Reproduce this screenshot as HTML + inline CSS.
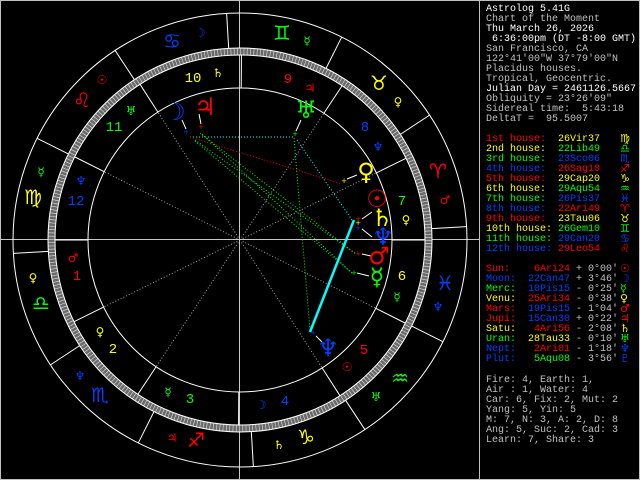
<!DOCTYPE html>
<html><head><meta charset="utf-8">
<style>
html,body{margin:0;padding:0;background:#000;}
body{width:640px;height:480px;position:relative;overflow:hidden;font-family:"Liberation Mono","DejaVu Sans Mono",monospace;}
svg{position:absolute;left:0;top:0;}
.p{position:absolute;font-size:10px;line-height:10px;white-space:pre;}
.w{color:#fff}.g{color:#c0c0c0}.r{color:#f00}.y{color:#ff0}.gr{color:#0f0}.b{color:#0040ff}
.gl{font-family:"DejaVu Sans",sans-serif;font-size:11px;}
</style></head><body>
<svg id="s" width="640" height="480" xmlns="http://www.w3.org/2000/svg" font-family="DejaVu Sans, sans-serif" text-anchor="middle" dominant-baseline="central">
<rect x="0.5" y="0.5" width="639" height="479" fill="none" stroke="#c0c0c0"/>
<line x1="479.5" y1="0" x2="479.5" y2="480" stroke="#c0c0c0"/>
<line x1="0" y1="239.5" x2="479" y2="239.5" stroke="#c8c8c8"/>
<line x1="239.5" y1="0" x2="239.5" y2="480" stroke="#c8c8c8"/>
<circle cx="240" cy="240" r="188.5" fill="none" stroke="#6a6a6a" stroke-width="7"/>
<circle cx="240" cy="240" r="188.5" fill="none" stroke="#d0d0d0" stroke-width="7" stroke-dasharray="0.7 2.59"/>
<g fill="none" stroke="#fff" stroke-width="1">
<circle cx="240" cy="240" r="227"/>
<circle cx="240" cy="240" r="192"/>
<circle cx="240" cy="240" r="185"/>
<circle cx="240" cy="240" r="152"/>
</g>
<g id="lines"></g>
<g fill="none" stroke-dasharray="1 2" stroke-width="1">
<line x1="190" y1="137" x2="295" y2="137" stroke="#0ff"/>
<line x1="297" y1="140" x2="352" y2="220" stroke="#0ff"/>
<line x1="190" y1="137" x2="342" y2="184" stroke="#f00"/>
<line x1="195" y1="140" x2="356" y2="254" stroke="#0f0"/>
<line x1="200" y1="133" x2="356" y2="254" stroke="#0f0"/>
<line x1="195" y1="141" x2="352" y2="273" stroke="#0f0"/>
<line x1="202" y1="134" x2="352" y2="273" stroke="#0f0"/>
<line x1="294" y1="138" x2="310" y2="330" stroke="#0f0"/>
</g>
<line x1="354" y1="220" x2="310" y2="332" stroke="#0ff" stroke-width="2.5"/>
<g stroke="#fff" stroke-width="1">
<line x1="186" y1="129" x2="182" y2="120"/>
<line x1="201" y1="124" x2="199" y2="114"/>
<line x1="296" y1="131" x2="301" y2="120"/>
<line x1="347" y1="179" x2="357" y2="175"/>
<line x1="362" y1="219" x2="372" y2="212"/>
<line x1="362" y1="229" x2="372" y2="237"/>
<line x1="362" y1="254" x2="371" y2="256"/>
<line x1="357" y1="273" x2="369" y2="276"/>
<line x1="316" y1="336" x2="322" y2="342"/>
</g>
<g font-size="7">
<text x="186" y="132" fill="#0040ff">+</text>
<text x="201" y="127" fill="#f00">+</text>
<text x="295" y="134" fill="#0f0">+</text>
<text x="344" y="181" fill="#ff0">+</text>
<text x="358" y="219" fill="#f00">+</text>
<text x="358" y="223" fill="#ff0">+</text>
<text x="358" y="228" fill="#0040ff">+</text>
<text x="358" y="254" fill="#f00">+</text>
<text x="354" y="273" fill="#0f0">+</text>
<text x="313" y="333" fill="#0040ff">+</text>
</g>
<g font-size="20">
<text x="172" y="41" fill="#0040ff">♋</text>
<text x="282" y="33" fill="#0f0">♊</text>
<text x="379" y="83" fill="#ff0">♉</text>
<text x="438" y="171" fill="#f00">♈</text>
<text x="445" y="283" fill="#0040ff">♓</text>
<text x="400" y="378" fill="#0f0">♒</text>
<text x="306" y="437" fill="#ff0">♑</text>
<text x="196" y="440" fill="#f00">♐</text>
<text x="100" y="395" fill="#0040ff">♏</text>
<text x="41" y="303" fill="#0f0">♎</text>
<text x="33" y="197" fill="#ff0">♍</text>
<text x="82" y="100" fill="#f00">♌</text>
</g>
<g font-size="12">
<text x="102" y="80" fill="#f00">☉</text>
<text x="200" y="33" fill="#0040ff">☽</text>
<text x="307" y="41" fill="#0f0">☿</text>
<text x="398" y="102" fill="#ff0">♀</text>
<text x="445" y="200" fill="#f00">♂</text>
<text x="438" y="307" fill="#0040ff">♆</text>
<text x="376" y="397" fill="#0f0">♅</text>
<text x="279" y="445" fill="#ff0">♄</text>
<text x="172" y="438" fill="#f00">♃</text>
<text x="80" y="376" fill="#0040ff">♆</text>
<text x="33" y="278" fill="#ff0">♀</text>
<text x="41" y="172" fill="#0f0">☿</text>
<text x="218" y="73" fill="#ff0">♄</text>
<text x="131" y="111" fill="#0f0">♅</text>
<text x="81" y="181" fill="#0040ff">♆</text>
<text x="73" y="258" fill="#f00">♂</text>
<text x="100" y="332" fill="#ff0">♀</text>
<text x="168" y="392" fill="#0f0">☿</text>
<text x="261" y="405" fill="#0040ff">☽</text>
<text x="347" y="367" fill="#f00">☉</text>
<text x="397" y="297" fill="#0f0">☿</text>
<text x="406" y="220" fill="#ff0">♀</text>
<text x="378" y="147" fill="#0040ff">♆</text>
<text x="310" y="88" fill="#f00">♃</text>
</g>
<g font-family="Liberation Mono, monospace" font-size="14">
<text x="77" y="277" fill="#f00">1</text>
<text x="113" y="350" fill="#ff0">2</text>
<text x="190" y="400" fill="#0f0">3</text>
<text x="285" y="402" fill="#0040ff">4</text>
<text x="364" y="351" fill="#f00">5</text>
<text x="402" y="277" fill="#ff0">6</text>
<text x="402" y="202" fill="#0f0">7</text>
<text x="365" y="128" fill="#0040ff">8</text>
<text x="288" y="80" fill="#f00">9</text>
<text x="193" y="79" fill="#ff0">10</text>
<text x="114" y="128" fill="#0f0">11</text>
<text x="76" y="202" fill="#0040ff">12</text>
</g>
<g font-size="24">
<text x="175" y="112" fill="#0040ff">☽</text>
<text x="205" y="107" fill="#f00">♃</text>
<text x="306" y="110" fill="#0f0">♅</text>
<text x="366" y="172" fill="#ff0">♀</text>
<text x="377" y="199" fill="#f00">☉</text>
<text x="382" y="218" fill="#ff0">♄</text>
<text x="383" y="237" fill="#0040ff">♆</text>
<text x="379" y="256" fill="#f00">♂</text>
<text x="377" y="277" fill="#0f0">☿</text>
<text x="328" y="348" fill="#0040ff">♆</text>
</g>
</svg>
<script>
(function(){
var g=document.getElementById('lines'),c=240,h='';
function L(t,r1,r2,col,dash){var a=t*Math.PI/180,x1=c+r1*Math.cos(a),y1=c-r1*Math.sin(a),x2=c+r2*Math.cos(a),y2=c-r2*Math.sin(a);
h+='<line x1="'+x1+'" y1="'+y1+'" x2="'+x2+'" y2="'+y2+'" stroke="'+col+'"'+(dash?' stroke-dasharray="1 2"':'')+'/>';}
for(var k=0;k<12;k++)L(3.38+30*k,192,227,'#fff');
var hs=[180,206.2,236.5,269.55,302.7,333.3,0,26.2,56.5,89.55,122.7,153.3];
hs.forEach(function(t,i){L(t,152,185,'#fff');if(i%3!=0)L(t,3,152,'#a0a0a0',1);});
g.innerHTML=h;})();
</script>
<div class="p w" style="left:486px;top:5px">Astrolog 5.41G</div>
<div class="p g" style="left:486px;top:15px">Chart of the Moment</div>
<div class="p w" style="left:486px;top:25px">Thu March 26, 2026</div>
<div class="p w" style="left:486px;top:35px"> 6:36:00pm (DT -8:00 GMT)</div>
<div class="p g" style="left:486px;top:45px">San Francisco, CA</div>
<div class="p g" style="left:486px;top:55px">122°41'00"W 37°79'00"N</div>
<div class="p g" style="left:486px;top:65px">Placidus houses.</div>
<div class="p g" style="left:486px;top:75px">Tropical, Geocentric.</div>
<div class="p w" style="left:486px;top:85px">Julian Day = 2461126.5667</div>
<div class="p g" style="left:486px;top:95px">Obliquity = 23°26'09"</div>
<div class="p g" style="left:486px;top:105px">Sidereal time:  5:43:18</div>
<div class="p g" style="left:486px;top:115px">DeltaT =  95.5007</div>

<div class="p r" style="left:486px;top:135px">1st house:</div><div class="p y" style="left:558px;top:135px">26Vir37</div><div class="p y gl" style="left:620px;top:134px">♍</div>
<div class="p y" style="left:486px;top:145px">2nd house:</div><div class="p gr" style="left:558px;top:145px">22Lib49</div><div class="p gr gl" style="left:620px;top:144px">♎</div>
<div class="p gr" style="left:486px;top:155px">3rd house:</div><div class="p b" style="left:558px;top:155px">23Sco06</div><div class="p b gl" style="left:620px;top:154px">♏</div>
<div class="p b" style="left:486px;top:165px">4th house:</div><div class="p r" style="left:558px;top:165px">26Sag10</div><div class="p r gl" style="left:620px;top:164px">♐</div>
<div class="p r" style="left:486px;top:175px">5th house:</div><div class="p y" style="left:558px;top:175px">29Cap20</div><div class="p y gl" style="left:620px;top:174px">♑</div>
<div class="p y" style="left:486px;top:185px">6th house:</div><div class="p gr" style="left:558px;top:185px">29Aqu54</div><div class="p gr gl" style="left:620px;top:184px">♒</div>
<div class="p gr" style="left:486px;top:195px">7th house:</div><div class="p b" style="left:558px;top:195px">26Pis37</div><div class="p b gl" style="left:620px;top:194px">♓</div>
<div class="p b" style="left:486px;top:205px">8th house:</div><div class="p r" style="left:558px;top:205px">22Ari49</div><div class="p r gl" style="left:620px;top:204px">♈</div>
<div class="p r" style="left:486px;top:215px">9th house:</div><div class="p y" style="left:558px;top:215px">23Tau06</div><div class="p y gl" style="left:620px;top:214px">♉</div>
<div class="p y" style="left:486px;top:225px">10th house:</div><div class="p gr" style="left:558px;top:225px">26Gem10</div><div class="p gr gl" style="left:620px;top:224px">♊</div>
<div class="p gr" style="left:486px;top:235px">11th house:</div><div class="p b" style="left:558px;top:235px">29Can20</div><div class="p b gl" style="left:620px;top:234px">♋</div>
<div class="p b" style="left:486px;top:245px">12th house:</div><div class="p r" style="left:558px;top:245px">29Leo54</div><div class="p r gl" style="left:620px;top:244px">♌</div>

<div class="p r" style="left:486px;top:265px">Sun:</div><div class="p r" style="left:522px;top:265px">  6Ari24</div><div class="p g" style="left:576px;top:265px">+ 0°00'</div><div class="p r gl" style="left:620px;top:264px">☉</div>
<div class="p b" style="left:486px;top:275px">Moon:</div><div class="p b" style="left:522px;top:275px"> 22Can47</div><div class="p g" style="left:576px;top:275px">+ 3°46'</div><div class="p b gl" style="left:620px;top:274px">☽</div>
<div class="p gr" style="left:486px;top:285px">Merc:</div><div class="p b" style="left:522px;top:285px"> 10Pis15</div><div class="p g" style="left:576px;top:285px">- 0°25'</div><div class="p gr gl" style="left:620px;top:284px">☿</div>
<div class="p y" style="left:486px;top:295px">Venu:</div><div class="p r" style="left:522px;top:295px"> 25Ari34</div><div class="p g" style="left:576px;top:295px">- 0°38'</div><div class="p y gl" style="left:620px;top:294px">♀</div>
<div class="p r" style="left:486px;top:305px">Mars:</div><div class="p b" style="left:522px;top:305px"> 19Pis15</div><div class="p g" style="left:576px;top:305px">- 1°04'</div><div class="p r gl" style="left:620px;top:304px">♂</div>
<div class="p r" style="left:486px;top:315px">Jupi:</div><div class="p b" style="left:522px;top:315px"> 15Can30</div><div class="p g" style="left:576px;top:315px">+ 0°22'</div><div class="p r gl" style="left:620px;top:314px">♃</div>
<div class="p y" style="left:486px;top:325px">Satu:</div><div class="p r" style="left:522px;top:325px">  4Ari56</div><div class="p g" style="left:576px;top:325px">- 2°08'</div><div class="p y gl" style="left:620px;top:324px">♄</div>
<div class="p gr" style="left:486px;top:335px">Uran:</div><div class="p y" style="left:522px;top:335px"> 28Tau33</div><div class="p g" style="left:576px;top:335px">- 0°10'</div><div class="p gr gl" style="left:620px;top:334px">♅</div>
<div class="p b" style="left:486px;top:345px">Nept:</div><div class="p r" style="left:522px;top:345px">  2Ari01</div><div class="p g" style="left:576px;top:345px">- 1°18'</div><div class="p b gl" style="left:620px;top:344px">♆</div>
<div class="p b" style="left:486px;top:355px">Plut:</div><div class="p gr" style="left:522px;top:355px">  5Aqu08</div><div class="p g" style="left:576px;top:355px">- 3°56'</div><div class="p b gl" style="left:620px;top:354px">♇</div>

<div class="p g" style="left:486px;top:376px">Fire: 4, Earth: 1,</div>
<div class="p g" style="left:486px;top:386px">Air : 1, Water: 4</div>
<div class="p g" style="left:486px;top:396px">Car: 6, Fix: 2, Mut: 2</div>
<div class="p g" style="left:486px;top:406px">Yang: 5, Yin: 5</div>
<div class="p g" style="left:486px;top:416px">M: 7, N: 3, A: 2, D: 8</div>
<div class="p g" style="left:486px;top:426px">Ang: 5, Suc: 2, Cad: 3</div>
<div class="p g" style="left:486px;top:436px">Learn: 7, Share: 3</div>
</body></html>
